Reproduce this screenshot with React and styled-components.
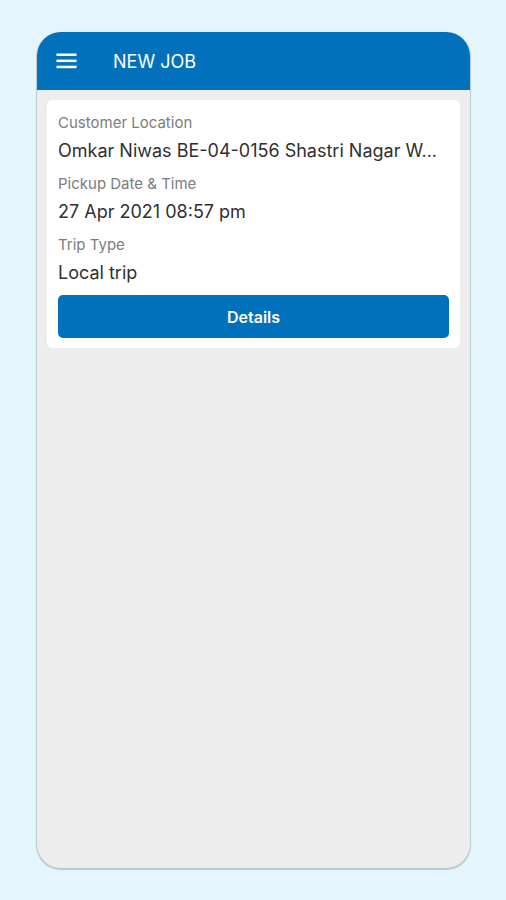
import React from 'react'
import styled, { createGlobalStyle, ThemeProvider } from 'styled-components'

const theme = {
  colors: {
    primary: '#0171bb',
    page: '#e4f5fd',
    screen: '#ededed',
    border: '#b9c8cf',
    label: '#7c7c7c',
    text: '#303030',
    white: '#fff'
  }
}

const GlobalStyle = createGlobalStyle`
  * {
    box-sizing: border-box;
  }
  body {
    margin: 0;
    background-color: ${({theme}) => theme.colors.page};
    font-family: Inter, 'Liberation Sans', sans-serif;
  }
`

const Page = styled.div`
  display: flex;
  min-height: 100vh;
  padding: 32px 36px 32px 37px;
`

const Screen = styled.main`
  flex: 1;
  min-width: 0;
  overflow: hidden;
  background-color: ${({theme}) => theme.colors.screen};
  border-radius: 24px;
  box-shadow: 0 1px 1px 1px ${({theme}) => theme.colors.border};
`

const Header = styled.header`
  display: flex;
  align-items: center;
  gap: 36px;
  height: 58px;
  padding: 0 19px;
  color: ${({theme}) => theme.colors.white};
  background-color: ${({theme}) => theme.colors.primary};
`

const MenuButton = styled.button`
  display: flex;
  padding: 0;
  color: inherit;
  background: none;
  border: 0;
  cursor: pointer;
`

const Title = styled.h1`
  margin: 0;
  padding-top: 2px;
  font-size: 18px;
  font-weight: 400;
  line-height: 24px;
`

const Card = styled.article`
  margin: 10px;
  padding: 11px 11px 10px;
  background-color: ${({theme}) => theme.colors.white};
  border-radius: 5px;
`

const Fields = styled.dl`
  display: flex;
  flex-direction: column;
  gap: 5px;
  margin: 0 0 6px;
`

const Label = styled.dt`
  color: ${({theme}) => theme.colors.label};
  font-size: 15px;
  line-height: 24px;
`

const Value = styled.dd`
  margin: 0;
  overflow: hidden;
  color: ${({theme}) => theme.colors.text};
  font-size: 18px;
  line-height: 32px;
  white-space: nowrap;
`

const Button = styled.button`
  width: 100%;
  height: 43px;
  padding: 0;
  color: ${({theme}) => theme.colors.white};
  font-family: inherit;
  font-size: 16px;
  font-weight: 600;
  background-color: ${({theme}) => theme.colors.primary};
  border: 0;
  border-radius: 5px;
  cursor: pointer;
`

const MenuIcon = () => (
  <svg width="21" height="16" viewBox="0 0 21 16" fill="currentColor" aria-hidden="true">
    <rect x="0.5" y="0.5" width="20" height="2.5" />
    <rect x="0.5" y="6.6" width="20" height="2.5" />
    <rect x="0.5" y="12.7" width="20" height="2.5" />
  </svg>
)

const job = [
  { label: 'Customer Location', value: 'Omkar Niwas BE-04-0156 Shastri Nagar W...' },
  { label: 'Pickup Date & Time', value: '27 Apr 2021 08:57 pm' },
  { label: 'Trip Type', value: 'Local trip' }
]

const JobCard = ({ fields }) => (
  <Card>
    <Fields>
      {fields.map(({ label, value }) => (
        <div key={label}>
          <Label>{label}</Label>
          <Value>{value}</Value>
        </div>
      ))}
    </Fields>
    <Button type="button">Details</Button>
  </Card>
)

export default () => {
  return (
    <ThemeProvider theme={theme}>
      <GlobalStyle />
      <Page>
        <Screen>
          <Header>
            <MenuButton type="button" aria-label="Menu">
              <MenuIcon />
            </MenuButton>
            <Title>NEW JOB</Title>
          </Header>
          <JobCard fields={job} />
        </Screen>
      </Page>
    </ThemeProvider>
  )
}
